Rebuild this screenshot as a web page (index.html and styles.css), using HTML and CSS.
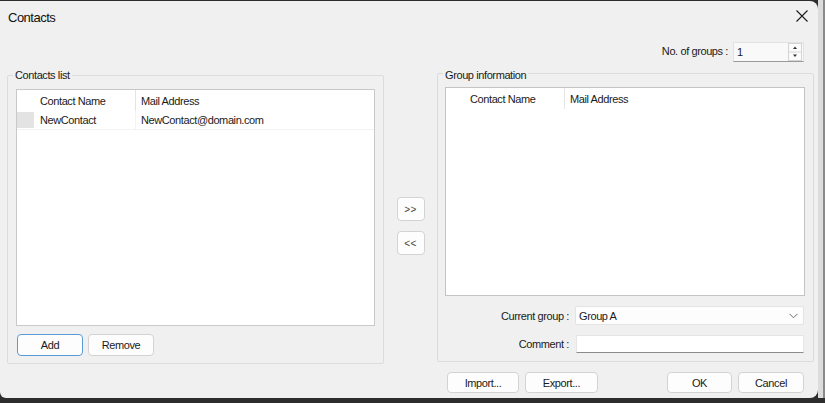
FILE: index.html
```html
<!DOCTYPE html>
<html lang="en">
<head>
    <meta charset="UTF-8">
    <title>Contacts</title>
    <link rel="stylesheet" href="styles.css">
</head>
<body>
    <div class="window">
        <div class="titlebar">
            <span class="title">Contacts</span>
            <svg class="close" width="12" height="12" viewBox="0 0 12 12">
                <path d="M0.5 0.5 L11.5 11.5 M11.5 0.5 L0.5 11.5" stroke="#1b1b1b" stroke-width="1.1" fill="none"/>
            </svg>
        </div>

        <div class="top-row">
            <span class="label">No. of groups :</span>
            <div class="spin">
                <span class="spin-value">1</span>
                <div class="spin-btns">
                    <svg width="14" height="18" viewBox="0 0 14 18">
                        <rect x="0.5" y="0.5" width="13" height="17" fill="#fbfbfb" stroke="#d4d4d4"/>
                        <line x1="1" y1="9" x2="13" y2="9" stroke="#d4d4d4"/>
                        <path d="M5 6 L7 3.5 L9 6 Z" fill="#333"/>
                        <path d="M5 11.5 L7 14 L9 11.5 Z" fill="#333"/>
                    </svg>
                </div>
            </div>
        </div>

        <div class="main">
            <div class="group group-left">
                <span class="group-title">Contacts list</span>
                <div class="list list-left">
                    <div class="list-head">
                        <div class="cell sel"></div>
                        <div class="cell col-name">Contact Name</div>
                        <div class="cell col-mail">Mail Address</div>
                    </div>
                    <div class="list-row">
                        <div class="cell sel sel-fill"></div>
                        <div class="cell col-name">NewContact</div>
                        <div class="cell col-mail">NewContact@domain.com</div>
                    </div>
                </div>
                <div class="btn-row">
                    <button class="btn btn-focus">Add</button>
                    <button class="btn">Remove</button>
                </div>
            </div>

            <div class="move-btns">
                <button class="btn btn-move">&gt;&gt;</button>
                <button class="btn btn-move">&lt;&lt;</button>
            </div>

            <div class="group group-right">
                <span class="group-title">Group information</span>
                <div class="list list-right">
                    <div class="list-head">
                        <div class="cell sel"></div>
                        <div class="cell col-name">Contact Name</div>
                        <div class="cell col-mail">Mail Address</div>
                    </div>
                </div>
                <div class="form-row">
                    <span class="label">Current group :</span>
                    <div class="combo">
                        <span>Group A</span>
                        <svg width="9" height="6" viewBox="0 0 9 6">
                            <path d="M0.5 0.8 L4.5 4.8 L8.5 0.8" stroke="#6d6d6d" stroke-width="1" fill="none"/>
                        </svg>
                    </div>
                </div>
                <div class="form-row">
                    <span class="label">Comment :</span>
                    <div class="text-input"></div>
                </div>
            </div>
        </div>

        <div class="bottom">
            <div class="bottom-btns">
                <div class="btn-group">
                    <button class="btn btn-import">Import...</button>
                    <button class="btn btn-export">Export...</button>
                </div>
                <div class="btn-group">
                    <button class="btn btn-ok">OK</button>
                    <button class="btn btn-cancel">Cancel</button>
                </div>
            </div>
        </div>
    </div>
    <div class="desktop-edge"></div>
</body>
</html>
```

FILE: styles.css
```css
:root {
    --win-bg: #f0f0f0;
    --text: #1a1a1a;
    --group-line: #dcdcdc;
    --list-border: #c9c9c9;
    --btn-border: #d3d3d3;
    --focus: #5b9bd5;
}

* {
    box-sizing: border-box;
}

body {
    margin: 0;
    width: 825px;
    height: 403px;
    overflow: hidden;
    display: flex;
    align-items: flex-start;
    background-color: #2d2d2d;
    font-family: "Liberation Sans", Arial, sans-serif;
    font-size: 11px;
    letter-spacing: -0.4px;
    color: var(--text);
}

.window {
    width: 818px;
    height: 397px;
    margin-top: 1px;
    background-color: var(--win-bg);
    border-radius: 0 8px 8px 6px;
    padding: 0 4px 0 7px;
    flex-shrink: 0;
}

.desktop-edge {
    width: 7px;
    height: 398px;
    background-color: #dcdcdc;
    border-right: 2px solid #8a8a8a;
}

.titlebar {
    height: 32px;
    display: flex;
    align-items: center;
    justify-content: space-between;
    margin-left: -7px;
    padding: 0 6px 0 8px;
}

.title {
    font-size: 13px;
    letter-spacing: -0.5px;
    color: #111;
}

.close {
    margin-bottom: 2px;
}

.top-row {
    margin-top: 9px;
    display: flex;
    align-items: center;
    justify-content: flex-end;
    padding-right: 10px;
}

.top-row .label {
    margin-right: 5px;
    margin-bottom: 2px;
}

.spin {
    width: 71px;
    height: 20px;
    display: flex;
    align-items: center;
    justify-content: space-between;
    background-color: #f9f9f9;
    border: 1px solid #e2e2e2;
    border-bottom-color: #9a9a9a;
    padding: 0 1px 0 3px;
}

.spin-btns {
    display: flex;
}

.main {
    margin-top: 11px;
    display: grid;
    grid-template-columns: 377px 53px 377px;
    align-items: start;
}

.group {
    position: relative;
    border: 1px solid var(--group-line);
    border-radius: 2px;
}

.group-title {
    position: absolute;
    top: -7px;
    left: 5px;
    padding: 0 2px;
    background-color: var(--win-bg);
    line-height: 12px;
}

.group-right .group-title {
    left: 5px;
    top: -5px;
}

.group-left {
    margin-top: 2px;
    padding: 13px 8px 7px 8px;
}

.group-right {
    padding: 13px 8px 8px 7px;
}

.list {
    background-color: #fff;
    border: 1px solid var(--list-border);
}

.list-left {
    height: 237px;
}

.list-right {
    height: 209px;
    border-color: #c4c4c4;
}

.list-head,
.list-row {
    display: flex;
}

.list-head {
    height: 21px;
}

.list-row {
    height: 19px;
    border-bottom: 1px solid #f3f3f3;
}

.cell {
    display: flex;
    align-items: center;
    padding-left: 5px;
}

.sel {
    width: 18px;
    padding: 0;
}

.sel-fill {
    background-color: #e3e3e3;
    margin: 1px 0 1px 0;
    width: 17px;
    margin-right: 1px;
}

.col-name {
    width: 101px;
    border-right: 1px solid #e4e4e4;
}

.list-row .col-name {
    border-right-color: #f3f3f3;
}

.col-mail {
    flex: 1;
}

.list-right .col-name {
    padding-left: 6px;
}

.btn {
    font-family: inherit;
    font-size: 11px;
    letter-spacing: -0.4px;
    color: var(--text);
    background-color: #fdfdfd;
    border: 1px solid var(--btn-border);
    border-radius: 4px;
    padding: 0;
    height: 22px;
}

.btn-focus {
    border-color: var(--focus);
}

.btn-row {
    margin-top: 8px;
    display: flex;
    gap: 5px;
    padding-left: 1px;
}

.btn-row .btn {
    width: 66px;
}

.move-btns {
    display: flex;
    flex-direction: column;
    align-items: center;
    gap: 10px;
    padding-top: 124px;
}

.btn-move {
    width: 28px;
    height: 24px;
    font-size: 10px;
    letter-spacing: 0.5px;
    color: #444;
}

.form-row {
    display: flex;
    align-items: center;
    margin-top: 10px;
}

.form-row .label {
    width: 130px;
    text-align: right;
    padding-right: 6px;
}

.combo {
    width: 229px;
    height: 19px;
    display: flex;
    align-items: center;
    justify-content: space-between;
    padding: 0 5px 0 3px;
    background-color: #fdfdfd;
    border: 1px solid #e3e3e3;
    border-radius: 2px;
}

.text-input {
    width: 228px;
    height: 18px;
    margin-left: 1px;
    background-color: #fff;
    border: 1px solid #e5e5e5;
    border-bottom-color: #8c8c8c;
}

.bottom {
    margin-top: 8px;
    display: grid;
    grid-template-columns: 430px 377px;
}

.bottom-btns {
    grid-column: 2;
    display: flex;
    justify-content: space-between;
    padding: 0 10px 0 10px;
}

.btn-group {
    display: flex;
    gap: 6px;
}

.bottom-btns .btn {
    height: 21px;
}

.btn-import {
    width: 72px;
}

.btn-export {
    width: 73px;
}

.btn-ok {
    width: 65px;
}

.btn-cancel {
    width: 66px;
}
```
